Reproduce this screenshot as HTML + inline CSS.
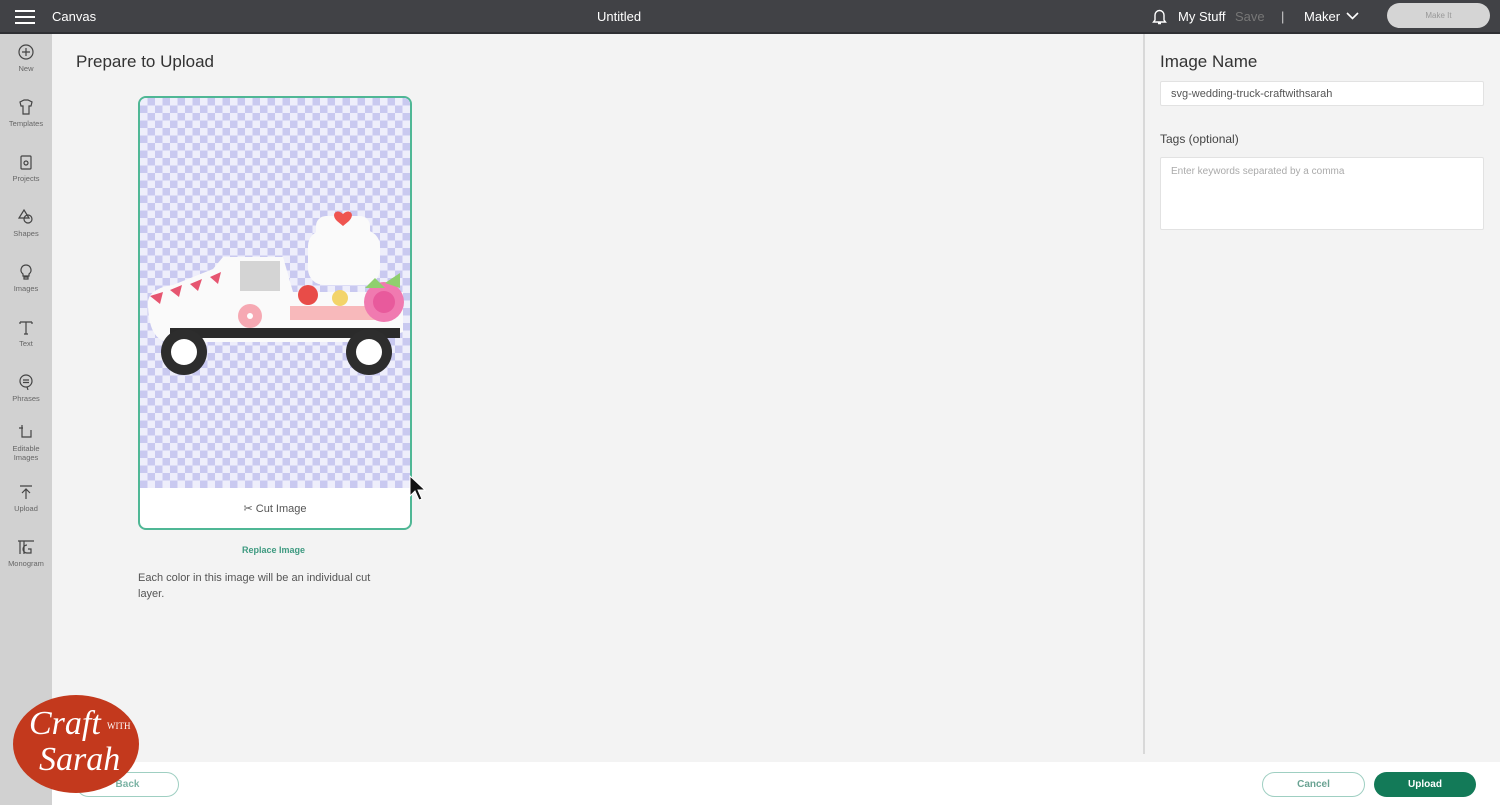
<!DOCTYPE html>
<html><head><meta charset="utf-8"><style>
*{margin:0;padding:0;box-sizing:border-box}
body{width:1500px;height:805px;overflow:hidden;background:#f3f3f3;font-family:"Liberation Sans",sans-serif;position:relative;color:#333}
.top{position:absolute;left:0;top:0;width:1500px;height:34px;background:#414246;border-bottom:2px solid #2e2f33;color:#fff}
.top span{position:absolute;top:9px;font-size:13px}
.side{position:absolute;left:0;top:34px;width:52px;height:771px;background:#d1d1d1}
.it{position:absolute;left:0;width:52px;text-align:center;font-size:7.5px;color:#666}
.it svg{display:block;margin:0 auto 4px}
.card{position:absolute;left:138px;top:96px;width:274px;height:434px;border:2px solid #4fb795;border-radius:8px;background:#fff;overflow:hidden}
.chk{position:absolute;left:0;top:0;width:270px;height:390px;background-color:#eeeefb;background-image:linear-gradient(45deg,#c9c9f0 25%,transparent 25%,transparent 75%,#c9c9f0 75%),linear-gradient(45deg,#c9c9f0 25%,transparent 25%,transparent 75%,#c9c9f0 75%);background-size:15px 15px;background-position:0 0,7.5px 7.5px}
.right{position:absolute;left:1143px;top:34px;width:2px;height:720px;background:#d8d8d8}
.inp{position:absolute;background:#fff;border:1px solid #e2e2e2;border-radius:2px;font-size:11px;color:#555;padding:0 10px}
.bot{position:absolute;left:52px;top:762px;width:1448px;height:43px;background:#fff}
.btn{position:absolute;height:25px;border-radius:13px;font-size:10px;font-weight:bold;text-align:center;line-height:23px}
</style></head><body>
<div class="top">
<svg style="position:absolute;left:15px;top:9px" width="20" height="16"><path d="M0 2h20M0 8h20M0 14h20" stroke="#fff" stroke-width="2"/></svg>
<span style="left:52px">Canvas</span>
<span style="left:597px">Untitled</span>
<svg style="position:absolute;left:1152px;top:8px" width="15" height="17" fill="none" stroke="#fff" stroke-width="1.4"><path d="M3 12V7a4.5 4.5 0 019 0v5l1.5 2h-12z M6 15.5h3"/></svg>
<span style="left:1178px">My Stuff</span>
<span style="left:1235px;color:#777">Save</span>
<span style="left:1281px;color:#ccc">|</span>
<span style="left:1304px">Maker</span>
<svg style="position:absolute;left:1346px;top:12px" width="13" height="9"><path d="M1 1l5.5 5.5L12 1" stroke="#fff" stroke-width="1.6" fill="none"/></svg>
<div style="position:absolute;left:1387px;top:3px;width:103px;height:25px;border-radius:13px;background:#d5d5d5;color:#999;font-size:8px;text-align:center;line-height:25px">Make It</div>
</div>
<div class="side">
<div class="it" style="top:10px"><svg width="16" height="16" fill="none" stroke="#444" stroke-width="1.2"><circle cx="8" cy="8" r="7"/><path d="M8 4v8M4 8h8"/></svg>New</div>
<div class="it" style="top:65px"><svg width="16" height="16" fill="none" stroke="#444" stroke-width="1.2"><path d="M2 3l4-2h4l4 2-1 4h-2v8H5V7H3z"/></svg>Templates</div>
<div class="it" style="top:120px"><svg width="16" height="16" fill="none" stroke="#444" stroke-width="1.2"><rect x="3" y="2" width="10" height="13" rx="1"/><circle cx="8" cy="9" r="2"/></svg>Projects</div>
<div class="it" style="top:175px"><svg width="16" height="16" fill="none" stroke="#444" stroke-width="1.2"><path d="M6 1l5 8H1z"/><circle cx="10" cy="10" r="4"/></svg>Shapes</div>
<div class="it" style="top:230px"><svg width="16" height="16" fill="none" stroke="#444" stroke-width="1.2"><path d="M8 1a5 5 0 00-3 9v2h6v-2a5 5 0 00-3-9zM6 13h4v2H6z"/></svg>Images</div>
<div class="it" style="top:285px"><svg width="16" height="16" fill="none" stroke="#444" stroke-width="1.2"><path d="M2 3h12M8 3v12M2 3v2M14 3v2M6 15h4"/></svg>Text</div>
<div class="it" style="top:340px"><svg width="16" height="16" fill="none" stroke="#444" stroke-width="1.2"><circle cx="8" cy="7" r="6"/><path d="M5 6h6M5 8.5h6M9 13l1 3"/></svg>Phrases</div>
<div class="it" style="top:390px"><svg width="16" height="16" fill="none" stroke="#444" stroke-width="1.2"><path d="M4 4v9h9V6M1 4h4M4 1v3"/></svg>Editable<br>Images</div>
<div class="it" style="top:450px"><svg width="16" height="16" fill="none" stroke="#444" stroke-width="1.2"><path d="M2 2h12M8 15V5M4 9l4-4 4 4"/></svg>Upload</div>
<div class="it" style="top:505px"><svg width="18" height="16" fill="none" stroke="#444" stroke-width="1.2"><path d="M1 2h16M3 2v13M7 2v13M10 6a3 3 0 100 8h4v-4h-3"/></svg>Monogram</div>
</div>
<div style="position:absolute;left:76px;top:52px;font-size:17px;color:#333">Prepare to Upload</div>
<div class="card">
<div class="chk"></div>
<svg style="position:absolute;left:0;top:0" width="270" height="390">
<rect x="168" y="132" width="72" height="55" rx="16" fill="#fafafa"/>
<rect x="176" y="118" width="54" height="30" rx="10" fill="#fafafa"/>
<path d="M203 116c-6-6-13 0-6 7l6 5 6-5c7-7 0-13-6-7z" fill="#ef5450"/>
<path d="M8 205c0-10 10-16 25-18l40-16 10-12h60l10 35h110v40l-30 10H30c-15 0-22-15-22-39z" fill="#fafafa"/>
<rect x="100" y="163" width="40" height="30" fill="#bbb" opacity=".6"/>
<rect x="150" y="208" width="90" height="14" fill="#f8b9bb"/>
<path d="M10 198l10 8 3-12zm20-6l9 7 3-12zm20-6l8 7 4-12zm20-7l8 7 3-12z" fill="#e65570"/>
<circle cx="168" cy="197" r="10" fill="#e84c48"/><circle cx="200" cy="200" r="8" fill="#f3d46a"/><circle cx="244" cy="204" r="20" fill="#f07ab0"/><circle cx="244" cy="204" r="11" fill="#e85a9c"/>
<path d="M225 190l10-10 10 10zm20-5l15-10v15z" fill="#8fcf6e"/>
<circle cx="110" cy="218" r="12" fill="#f6a9b3"/><circle cx="110" cy="218" r="3" fill="#fff"/>
<path d="M30 230h230v10H30z" fill="#2b2b2b"/>
<circle cx="44" cy="254" r="23" fill="#2d2d2d"/><circle cx="44" cy="254" r="13" fill="#fff"/>
<circle cx="229" cy="254" r="23" fill="#2d2d2d"/><circle cx="229" cy="254" r="13" fill="#fff"/>
</svg>
<div style="position:absolute;left:0;top:390px;width:270px;height:42px;text-align:center;line-height:42px;font-size:11px;color:#555">✂ Cut Image</div>
</div>
<div style="position:absolute;left:242px;top:545px;font-size:9px;font-weight:bold;color:#3e9a80">Replace Image</div>
<div style="position:absolute;left:138px;top:570px;width:255px;font-size:11px;line-height:16px;color:#555">Each color in this image will be an individual cut layer.</div>
<svg style="position:absolute;left:408px;top:474px" width="20" height="28"><path d="M2 2v20l5-5 4 9 3-1-4-9h7z" fill="#111" stroke="#fff"/></svg>
<div class="right"></div>
<div style="position:absolute;left:1160px;top:52px;font-size:17px;color:#333">Image Name</div>
<div class="inp" style="left:1160px;top:81px;width:324px;height:25px;line-height:25px">svg-wedding-truck-craftwithsarah</div>
<div style="position:absolute;left:1160px;top:132px;font-size:12px;color:#444">Tags (optional)</div>
<div class="inp" style="left:1160px;top:157px;width:324px;height:73px;padding-top:8px;color:#aaa;font-size:10px">Enter keywords separated by a comma</div>
<div class="bot"></div>
<div class="btn" style="left:76px;top:772px;width:103px;border:1.5px solid #9fcfc2;color:#7bb3a4;background:#fff">Back</div>
<div class="btn" style="left:1262px;top:772px;width:103px;border:1.5px solid #9fcfc2;color:#6aa393;background:#fff">Cancel</div>
<div class="btn" style="left:1374px;top:772px;width:102px;background:#137a58;color:#fff;line-height:25px">Upload</div>
<div style="position:absolute;left:13px;top:695px;width:126px;height:98px;border-radius:50%;background:#c3391d;color:#fff;font-family:'Liberation Serif',serif;font-style:italic">
<div style="position:absolute;left:16px;top:10px;font-size:34px">Craft</div>
<div style="position:absolute;left:94px;top:26px;font-size:9px;font-style:normal">WITH</div>
<div style="position:absolute;left:26px;top:46px;font-size:34px">Sarah</div>
</div>
</body></html>
